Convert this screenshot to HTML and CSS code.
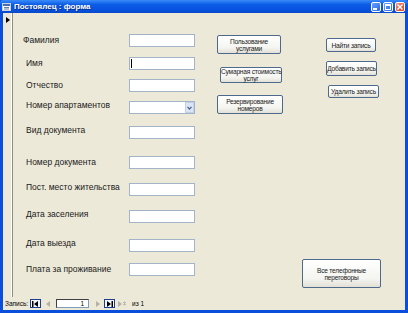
FILE: index.html
```html
<!DOCTYPE html>
<html lang="ru">
<head>
    <meta charset="UTF-8">
    <title>Постоялец : форма</title>
    <link rel="stylesheet" href="styles.css">
</head>
<body>
    <div class="window">
        <div class="titlebar">
            <svg class="appicon" width="9" height="8" viewBox="0 0 9 8">
                <rect x="0.5" y="0.5" width="8" height="7" fill="#ffffff" stroke="#c8d4e8"/>
                <rect x="1" y="1" width="7" height="2" fill="#4a6cb8"/>
                <line x1="2" y1="4.5" x2="7" y2="4.5" stroke="#6b7fa8"/>
                <line x1="2" y1="6" x2="7" y2="6" stroke="#6b7fa8"/>
            </svg>
            <span class="title">Постоялец : форма</span>
            <div class="ctrls">
                <span class="cbtn min"><i></i></span>
                <span class="cbtn max"><i></i></span>
                <span class="cbtn close">
                    <svg width="6" height="6" viewBox="0 0 6 6"><path d="M0.5 0.5 L5.5 5.5 M5.5 0.5 L0.5 5.5" stroke="#fff" stroke-width="1.4"/></svg>
                </span>
            </div>
        </div>
        <div class="client">
            <div class="form">
                <div class="selector">
                    <svg width="4" height="6" viewBox="0 0 4 6"><path d="M0 0 L4 3 L0 6 Z" fill="#000"/></svg>
                </div>
                <div class="fields">
                    <div class="row h23 first"><label>Фамилия</label><span class="box"></span></div>
                    <div class="row h22"><label>Имя</label><span class="box"><i class="caret"></i></span></div>
                    <div class="row h22"><label>Отчество</label><span class="box"></span></div>
                    <div class="row h25 up"><label>Номер апартаментов</label><span class="box combo"><b class="drop"><svg width="5" height="4" viewBox="0 0 5 4"><path d="M0.5 0.8 L2.5 3 L4.5 0.8" fill="none" stroke="#4d6185" stroke-width="1.2"/></svg></b></span></div>
                    <div class="row h30 up"><label>Вид документа</label><span class="box"></span></div>
                    <div class="row h27"><label>Номер документа</label><span class="box"></span></div>
                    <div class="row h27 up"><label>Пост. место жительства</label><span class="box"></span></div>
                    <div class="row h29 up"><label>Дата заселения</label><span class="box"></span></div>
                    <div class="row h24 up"><label>Дата выезда</label><span class="box"></span></div>
                    <div class="row"><label>Плата за проживание</label><span class="box"></span></div>
                </div>
                <div class="mid">
                    <button class="btn b-use">Пользование<br>услугами</button>
                    <button class="btn b-sum">Сумарная стоимость<br>услуг</button>
                    <button class="btn b-res">Резервирование<br>номеров</button>
                </div>
                <div class="side">
                    <button class="btn b-find">Найти запись</button>
                    <button class="btn b-add">Добавить запись</button>
                    <button class="btn b-del">Удалить запись</button>
                    <button class="btn b-tel">Все телефонные<br>переговоры</button>
                </div>
            </div>
            <div class="nav">
                <span class="navlabel">Запись:</span>
                <span class="nbtn on">
                    <svg width="7" height="6" viewBox="0 0 7 6"><rect x="0" y="0" width="1.5" height="6" fill="#000"/><path d="M6 0 L2 3 L6 6 Z" fill="#000"/></svg>
                </span>
                <span class="nbtn off">
                    <svg width="4" height="6" viewBox="0 0 4 6"><path d="M4 0 L0 3 L4 6 Z" fill="#b4b2a6"/></svg>
                </span>
                <span class="recno">1</span>
                <span class="nbtn off">
                    <svg width="4" height="6" viewBox="0 0 4 6"><path d="M0 0 L4 3 L0 6 Z" fill="#b4b2a6"/></svg>
                </span>
                <span class="nbtn on">
                    <svg width="7" height="6" viewBox="0 0 7 6"><path d="M1 0 L5 3 L1 6 Z" fill="#000"/><rect x="5.5" y="0" width="1.5" height="6" fill="#000"/></svg>
                </span>
                <span class="nbtn off">
                    <svg width="8" height="6" viewBox="0 0 8 6"><path d="M0 0 L4 3 L0 6 Z" fill="#b4b2a6"/><path d="M5 1 L8 4 M8 1 L5 4 M6.5 0.5 L6.5 4.5" stroke="#b4b2a6" stroke-width="0.8"/></svg>
                </span>
                <span class="navlabel of">из 1</span>
            </div>
        </div>
    </div>
</body>
</html>
```

FILE: styles.css
```css
*{
    box-sizing: border-box;
}
body{
    margin: 0;
    font-family: "Liberation Sans", Arial, sans-serif;
}

.window{
    width: 408px;
    height: 313px;
    background-color: #0a4fdc;
    padding: 0 3px 3px 3px;
    display: flex;
    flex-direction: column;
}

/* заголовок окна */
.titlebar{
    height: 13px;
    margin: 0 -3px;
    padding: 0 3px 0 2px;
    display: flex;
    align-items: center;
    background: linear-gradient(#3a8cf8, #0c5ce6 35%, #0752e0 75%, #0a49c8);
    border-radius: 3px 3px 0 0;
}
.appicon{
    margin-right: 3px;
}
.title{
    color: #ffffff;
    font-size: 8px;
    font-weight: 700;
    text-shadow: 1px 1px 0 #0a2f8a;
    flex: 1;
}
.ctrls{
    display: flex;
    gap: 2px;
}
.cbtn{
    width: 10px;
    height: 10px;
    border: 1px solid #ffffff;
    border-radius: 2px;
    background: linear-gradient(135deg, #6aa0ff, #2a66e8);
    display: flex;
    align-items: center;
    justify-content: center;
    position: relative;
}
.cbtn.min i{
    width: 4px;
    height: 2px;
    background: #ffffff;
    margin-top: 4px;
    margin-right: 2px;
}
.cbtn.max i{
    width: 6px;
    height: 6px;
    border: 1px solid #ffffff;
    border-top-width: 2px;
}
.cbtn.close{
    background: linear-gradient(135deg, #f0907a, #d8421e);
}

/* область формы */
.client{
    flex: 1;
    background-color: #ece9d8;
    display: flex;
    flex-direction: column;
}
.form{
    flex: 1;
    display: flex;
}
.selector{
    width: 10px;
    border-right: 1px solid #8e8c80;
    box-shadow: inset -1px 0 0 #ffffff;
    padding: 4px 0 0 3px;
}
.selector svg{
    display: block;
}

.fields{
    width: 204px;
    padding: 21px 0 0 10px;
}
.row{
    display: flex;
    align-items: flex-start;
}
.h22{ height: 22px; }
.h23{ height: 23px; }
.h24{ height: 24px; }
.h25{ height: 25px; }
.h27{ height: 27px; }
.h29{ height: 29px; }
.h30{ height: 30px; }

.row label{
    width: 106px;
    padding-left: 3px;
    font-size: 8.5px;
    line-height: 13px;
    color: #1a1a1a;
    white-space: nowrap;
}
.row.first label{
    padding-left: 0;
}
.row.up label{
    margin-top: -2px;
}
.box{
    width: 66px;
    height: 13px;
    background: #ffffff;
    border: 1px solid #a3b3c8;
    position: relative;
    display: flex;
    align-items: center;
}
.caret{
    width: 1px;
    height: 9px;
    background: #000000;
    margin-left: 1px;
}
.combo{
    justify-content: flex-end;
}
.drop{
    width: 9px;
    height: 11px;
    background: #dbe5f7;
    border: 1px solid #c3d0ea;
    display: flex;
    align-items: center;
    justify-content: center;
}

/* кнопки */
.btn{
    display: block;
    padding: 0;
    font-family: "Liberation Sans", Arial, sans-serif;
    font-size: 6.6px;
    line-height: 7px;
    letter-spacing: -0.2px;
    white-space: nowrap;
    color: #1a1a1a;
    text-align: center;
    background: linear-gradient(#ffffff, #f4f4f0 70%, #e2e0d6);
    border: 1px solid #4d6a8c;
    border-radius: 2px;
}
.mid{
    width: 66px;
    padding-top: 22px;
    display: flex;
    flex-direction: column;
    align-items: flex-start;
}
.b-use{
    width: 64px;
    height: 19px;
}
.b-sum{
    width: 62px;
    height: 16px;
    margin: 13px 0 0 3px;
}
.b-res{
    width: 66px;
    height: 19px;
    margin-top: 12px;
}

.side{
    flex: 1;
    padding: 25px 0 9px 0;
    display: flex;
    flex-direction: column;
    align-items: flex-start;
}
.b-find{
    width: 50px;
    height: 14px;
    margin-left: 43px;
}
.b-add{
    width: 51px;
    height: 15px;
    margin: 9px 0 0 43px;
}
.b-del{
    width: 51px;
    height: 13px;
    margin: 9px 0 0 45px;
}
.b-tel{
    width: 79px;
    height: 29px;
    margin: auto 0 0 19px;
}

/* навигация по записям */
.nav{
    height: 13px;
    display: flex;
    align-items: center;
    padding-left: 2px;
    font-size: 6.5px;
}
.navlabel{
    width: 25px;
}
.navlabel.of{
    margin-left: 4px;
}
.nbtn{
    height: 9px;
    display: flex;
    align-items: center;
    justify-content: center;
}
.nbtn.on{
    width: 11px;
    border: 1px solid #1b3f8a;
    background: #f4f6fb;
}
.nbtn.off{
    width: 9px;
    margin: 0 2px;
}
.recno{
    width: 33px;
    height: 9px;
    background: #ffffff;
    border: 1px solid #7f9db9;
    border-left-color: #404040;
    border-top-color: #404040;
    text-align: right;
    line-height: 7px;
    padding-right: 4px;
    margin: 0 2px;
}
```
